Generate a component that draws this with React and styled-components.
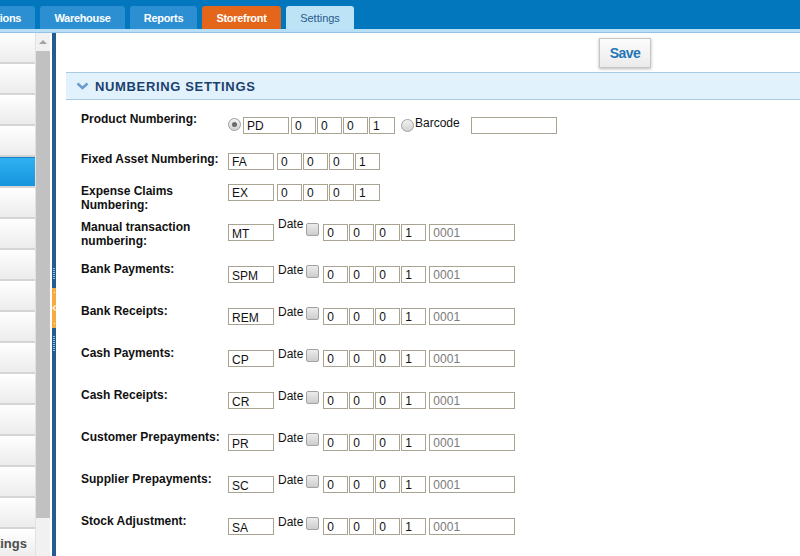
import React from 'react';
import styled, { createGlobalStyle } from 'styled-components';

const GlobalStyle = createGlobalStyle`
  html, body { margin: 0; padding: 0; background: #fff; overflow: hidden; }
  body { font-family: "Liberation Sans", Arial, sans-serif; }
  *, *::before, *::after { box-sizing: border-box; }
`;

const Page = styled.div`
  width: 800px;
  height: 556px;
  display: flex;
  flex-direction: column;
  overflow: hidden;
  background: #fff;
`;

const TopBar = styled.div`
  flex: none;
  height: 29px;
  background: #0277bd;
  display: flex;
  align-items: flex-end;
  gap: 5px;
  overflow: hidden;
`;

const tabBg = { normal: '#2b8fd2', orange: '#e4661b', active: '#bde3f7' };

const Tab = styled.div`
  flex: none;
  width: ${(p) => p.$w}px;
  margin-left: ${(p) => p.$ml || 0}px;
  height: 23px;
  border-radius: 3px 3px 0 0;
  background: ${(p) => tabBg[p.$variant || 'normal']};
  color: ${(p) => (p.$variant === 'active' ? '#2a5c8a' : '#fff')};
  font-size: 11px;
  font-weight: ${(p) => (p.$variant === 'active' ? 400 : 700)};
  letter-spacing: ${(p) => (p.$variant === 'active' ? 0 : -0.3)}px;
  display: flex;
  align-items: center;
  justify-content: center;
  white-space: nowrap;
`;

const Strip = styled.div`
  flex: none;
  height: 4px;
  background: #b8dff6;
  border-bottom: 1px solid #8fc3e9;
`;

const Body = styled.div`
  flex: 1;
  min-height: 0;
  display: flex;
`;

const Sidebar = styled.div`
  flex: none;
  width: 35px;
  display: flex;
  flex-direction: column;
  overflow: hidden;
`;

const SideItem = styled.div`
  flex: none;
  height: 31px;
  border-bottom: 2px solid #d5d5d5;
  background: ${(p) =>
    p.$selected
      ? 'linear-gradient(#2fb1f3, #1694dc)'
      : 'linear-gradient(#ffffff, #ececec)'};
  border-top: ${(p) => (p.$selected ? '1px solid #1a7fc2' : 'none')};
  display: flex;
  align-items: center;
  justify-content: flex-end;
  padding-right: 8px;
  font-size: 13px;
  font-weight: 700;
  color: #4d4d4d;
  white-space: nowrap;
  overflow: hidden;
`;

const Scrollbar = styled.div`
  flex: none;
  width: 15px;
  border-left: 1px solid #e2e2e2;
  background: #f1f1f1;
  display: flex;
  flex-direction: column;
`;

const ScrollArrow = styled.div`
  flex: none;
  height: 18px;
  display: flex;
  align-items: center;
  justify-content: center;
  &::before {
    content: '';
    border-left: 4px solid transparent;
    border-right: 4px solid transparent;
    border-bottom: 4px solid #a3a3a3;
  }
`;

const ScrollThumb = styled.div`
  flex: none;
  height: 467px;
  background: #c1c1c1;
`;

const Splitter = styled.div`
  flex: none;
  width: 4px;
  margin-left: 2px;
  background: #245b91;
  display: flex;
  flex-direction: column;
  padding-top: 235px;
`;

const Grip = styled.div`
  flex: none;
  height: ${(p) => p.$h}px;
  margin: ${(p) => p.$mt || 0}px 1px 0;
  background: repeating-linear-gradient(to bottom, #93bde3 0 1px, transparent 1px 2px);
`;

const Handle = styled.div`
  flex: none;
  height: 40px;
  margin-top: 8px;
  background: #f9aa3f;
  display: flex;
  flex-direction: column;
  align-items: center;
  justify-content: space-between;
  padding: 4px 0;
`;

const Dot = styled.span`
  width: 1px;
  height: 1px;
  background: #fff;
`;

const Content = styled.div`
  flex: 1;
  min-width: 0;
  display: flex;
  flex-direction: column;
`;

const Toolbar = styled.div`
  flex: none;
  height: 39px;
  padding: 5px 0 0 543px;
`;

const SaveButton = styled.button`
  width: 52px;
  height: 30px;
  border: 1px solid #c6c6c6;
  background: linear-gradient(#fcfcfc, #ebebeb);
  box-shadow: 0 1px 3px rgba(0, 0, 0, 0.28);
  color: #1f75b6;
  font-family: "Liberation Sans", Arial, sans-serif;
  font-size: 14px;
  font-weight: 700;
  letter-spacing: -0.6px;
  padding: 0;
`;

const SectionHeader = styled.div`
  flex: none;
  height: 28px;
  margin-left: 10px;
  background: #e2f2fd;
  border-top: 1px solid #a9cce6;
  border-bottom: 1px solid #a9cce6;
  display: flex;
  align-items: center;
  padding-left: 10px;
  gap: 6px;
`;

const SectionTitle = styled.span`
  font-size: 13px;
  font-weight: 700;
  color: #1c3f6e;
  letter-spacing: 0.65px;
`;

const Form = styled.div`
  padding: 11px 0 0 25px;
  display: flex;
  flex-direction: column;
`;

const FormRow = styled.div`
  flex: none;
  height: ${(p) => p.$h}px;
  display: flex;
  align-items: flex-start;
`;

const Label = styled.div`
  flex: none;
  width: 147px;
  margin-top: ${(p) => p.$mt || 0}px;
  font-size: 12px;
  font-weight: 700;
  line-height: 14px;
  color: #111;
  white-space: pre-line;
`;

const TextBox = styled.input`
  flex: none;
  width: ${(p) => p.$w}px;
  height: 17px;
  margin: ${(p) => p.$mt || 0}px 0 0 ${(p) => p.$ml || 0}px;
  border: 1px solid #a9a391;
  border-radius: 0;
  background: #fff;
  padding: ${(p) => (p.$low ? '2px 2px 0 3px' : '0 2px 0 3px')};
  font-family: "Liberation Sans", Arial, sans-serif;
  font-size: 12px;
  color: ${(p) => (p.$muted ? '#7a7a7a' : '#111')};
  outline: none;
`;

const DigitGroup = styled.div`
  flex: none;
  display: flex;
  gap: 1px;
  margin: ${(p) => p.$mt || 0}px 0 0 ${(p) => p.$ml || 0}px;
`;

const Radio = styled.span`
  flex: none;
  width: 13px;
  height: 13px;
  margin: ${(p) => p.$mt || 0}px 0 0 ${(p) => p.$ml || 0}px;
  border-radius: 50%;
  border: 1px solid #a0a0a0;
  background: linear-gradient(#f2f2f2, #d2d2d2);
  display: flex;
  align-items: center;
  justify-content: center;
  &::after {
    content: '';
    display: ${(p) => (p.$checked ? 'block' : 'none')};
    width: 5px;
    height: 5px;
    border-radius: 50%;
    background: #6a6a6a;
  }
`;

const CheckBox = styled.span`
  flex: none;
  width: 13px;
  height: 13px;
  margin: ${(p) => p.$mt || 0}px 0 0 ${(p) => p.$ml || 0}px;
  border: 1px solid #a2a2a2;
  border-radius: 2px;
  background: linear-gradient(#ececec, #cdcdcd);
`;

const InlineText = styled.span`
  flex: none;
  margin: ${(p) => p.$mt || 0}px 0 0 ${(p) => p.$ml || 0}px;
  font-size: 12px;
  line-height: 14px;
  color: #111;
`;

const Chevron = () => (
  <svg width="13" height="8" viewBox="0 0 13 8">
    <polyline points="1.5,1.5 6.5,6 11.5,1.5" fill="none" stroke="#6b9dcc" strokeWidth="2.6" strokeLinejoin="miter" />
  </svg>
);

const Digits = ({ mt, ml, lastW = 25 }) => (
  <DigitGroup $mt={mt} $ml={ml}>
    <TextBox $w={25} value="0" readOnly />
    <TextBox $w={25} value="0" readOnly />
    <TextBox $w={25} value="0" readOnly />
    <TextBox $w={lastW} value="1" readOnly />
  </DigitGroup>
);

const dateRows = [
  { label: 'Manual transaction\nnumbering:', code: 'MT', dateMt: 0 },
  { label: 'Bank Payments:', code: 'SPM' },
  { label: 'Bank Receipts:', code: 'REM' },
  { label: 'Cash Payments:', code: 'CP' },
  { label: 'Cash Receipts:', code: 'CR' },
  { label: 'Customer Prepayments:', code: 'PR' },
  { label: 'Supplier Prepayments:', code: 'SC' },
  { label: 'Stock Adjustment:', code: 'SA' },
];

export default function App() {
  const sideItems = Array.from({ length: 17 }, (_, i) => i);
  return (
    <Page>
      <GlobalStyle />
      <TopBar>
        <Tab $w={92} $ml={-57}>Transactions</Tab>
        <Tab $w={85}>Warehouse</Tab>
        <Tab $w={67}>Reports</Tab>
        <Tab $w={79} $variant="orange">Storefront</Tab>
        <Tab $w={68} $variant="active">Settings</Tab>
      </TopBar>
      <Strip />
      <Body>
        <Sidebar>
          {sideItems.map((i) => (
            <SideItem key={i} $selected={i === 4}>
              {i === 16 ? 'Settings' : ''}
            </SideItem>
          ))}
        </Sidebar>
        <Scrollbar>
          <ScrollArrow />
          <ScrollThumb />
        </Scrollbar>
        <Splitter>
          <Grip $h={12} />
          <Handle>
            <Dot />
            <svg width="4" height="6" viewBox="0 0 4 6">
              <polyline points="3.5,0.5 1,3 3.5,5.5" fill="none" stroke="#fff" strokeWidth="1.2" />
            </svg>
            <Dot />
          </Handle>
          <Grip $h={16} $mt={8} />
        </Splitter>
        <Content>
          <Toolbar>
            <SaveButton>Save</SaveButton>
          </Toolbar>
          <SectionHeader>
            <Chevron />
            <SectionTitle>NUMBERING SETTINGS</SectionTitle>
          </SectionHeader>
          <Form>
            <FormRow $h={41}>
              <Label $mt={1}>Product Numbering:</Label>
              <Radio $mt={7} $checked />
              <TextBox $w={46} $ml={2} $mt={6} value="PD" readOnly />
              <Digits mt={6} ml={2} lastW={26} />
              <Radio $mt={8} $ml={6} />
              <InlineText $mt={5} $ml={1}>Barcode</InlineText>
              <TextBox $w={86} $ml={11} $mt={6} value="" readOnly />
            </FormRow>
            <FormRow $h={32}>
              <Label>Fixed Asset Numbering:</Label>
              <TextBox $w={46} $mt={1} value="FA" readOnly />
              <Digits mt={1} ml={3} />
            </FormRow>
            <FormRow $h={33}>
              <Label>{'Expense Claims\nNumbering:'}</Label>
              <TextBox $w={46} value="EX" readOnly />
              <Digits ml={3} />
            </FormRow>
            {dateRows.map((r) => (
              <FormRow $h={42} key={r.code}>
                <Label $mt={3}>{r.label}</Label>
                <TextBox $w={46} $mt={7} $low value={r.code} readOnly />
                <InlineText $ml={4} $mt={r.dateMt ?? 3.5}>Date</InlineText>
                <CheckBox $ml={3} $mt={6} />
                <Digits mt={7} ml={4} />
                <TextBox $w={86} $ml={3} $mt={7} $muted value="0001" readOnly />
              </FormRow>
            ))}
          </Form>
        </Content>
      </Body>
    </Page>
  );
}
